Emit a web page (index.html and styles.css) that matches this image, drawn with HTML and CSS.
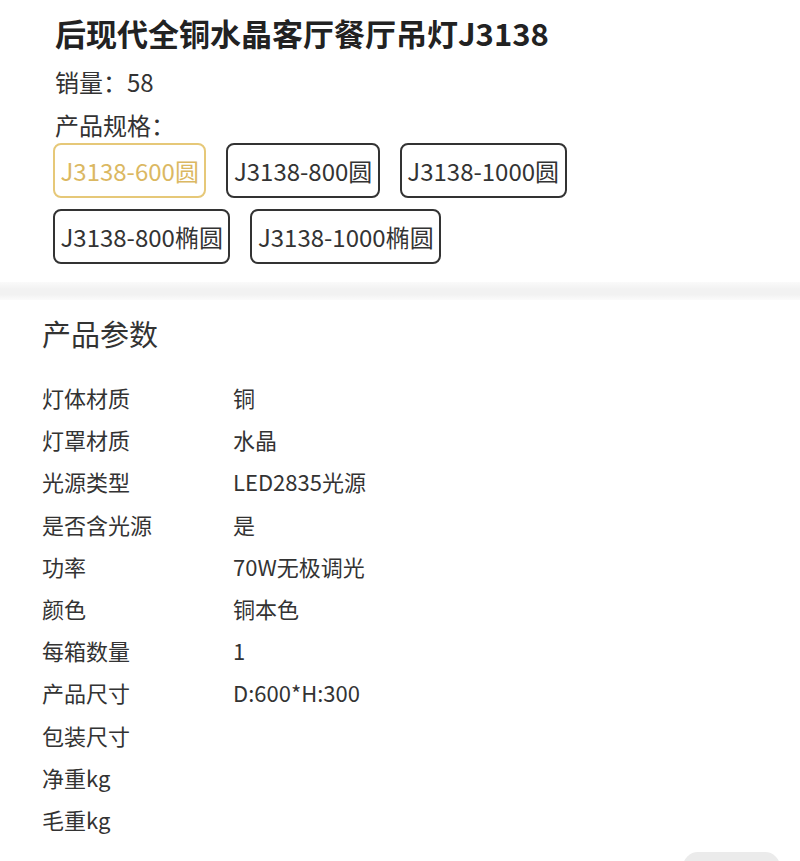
FILE: index.html
```html
<!DOCTYPE html>
<html>
<head>
    <meta charset="utf-8">
    <title>后现代全铜水晶客厅餐厅吊灯J3138</title>
    <link rel="stylesheet" href="styles.css">
</head>
<body>
    <div class="product-top">
        <h1 class="product-title">后现代全铜水晶客厅餐厅吊灯J3138</h1>
        <div class="product-sales">销量：58</div>
        <div class="spec-label">产品规格：</div>
        <div class="spec-list">
            <span class="spec-item active">J3138-600圆</span>
            <span class="spec-item">J3138-800圆</span>
            <span class="spec-item">J3138-1000圆</span>
            <span class="spec-item">J3138-800椭圆</span>
            <span class="spec-item">J3138-1000椭圆</span>
        </div>
    </div>

    <div class="divider"></div>

    <div class="params">
        <h2 class="params-title">产品参数</h2>
        <div class="param-row"><span class="param-name">灯体材质</span><span class="param-value">铜</span></div>
        <div class="param-row"><span class="param-name">灯罩材质</span><span class="param-value">水晶</span></div>
        <div class="param-row"><span class="param-name">光源类型</span><span class="param-value">LED2835光源</span></div>
        <div class="param-row"><span class="param-name">是否含光源</span><span class="param-value">是</span></div>
        <div class="param-row"><span class="param-name">功率</span><span class="param-value">70W无极调光</span></div>
        <div class="param-row"><span class="param-name">颜色</span><span class="param-value">铜本色</span></div>
        <div class="param-row"><span class="param-name">每箱数量</span><span class="param-value">1</span></div>
        <div class="param-row"><span class="param-name">产品尺寸</span><span class="param-value">D:600*H:300</span></div>
        <div class="param-row"><span class="param-name">包装尺寸</span><span class="param-value"></span></div>
        <div class="param-row"><span class="param-name">净重kg</span><span class="param-value"></span></div>
        <div class="param-row"><span class="param-name">毛重kg</span><span class="param-value"></span></div>
    </div>

    <div class="float-button"></div>
</body>
</html>
```

FILE: styles.css
```css
* {
    margin: 0;
    padding: 0;
    box-sizing: border-box;
    font-family: "Noto Sans CJK SC", "Noto Sans", sans-serif;
}

body {
    background: #fff;
    color: #333;
    height: 861px;
    overflow: hidden;
    position: relative;
}

.product-top {
    padding: 13px 20px 0 55px;
    height: 282px;
}

.product-title {
    font-size: 31px;
    font-weight: 700;
    line-height: 40px;
    color: #222;
}

.product-sales {
    margin-top: 8px;
    font-size: 24px;
    line-height: 42px;
}

.spec-label {
    margin-top: 4px;
    font-size: 24px;
    line-height: 36px;
}

.spec-list {
    display: flex;
    flex-wrap: wrap;
    gap: 11px 20px;
    margin-left: -2px;
    max-width: 560px;
}

.spec-item {
    display: inline-block;
    height: 55px;
    padding: 8px 5.5px;
    border: 2px solid #333;
    border-radius: 8px;
    font-size: 24px;
    line-height: 35px;
    color: #333;
}

.spec-item.active {
    border-color: #e6c878;
    color: #dbb862;
}

.divider {
    height: 18px;
    background: linear-gradient(to bottom, #fafafa, #f2f2f2 40%, #f2f2f2 70%, #fbfbfb);
}

.params {
    padding: 13px 20px 0 42px;
}

.params-title {
    font-size: 29px;
    font-weight: 400;
    line-height: 40px;
    margin-bottom: 23px;
}

.param-row {
    display: flex;
    height: 42.2px;
    align-items: center;
    font-size: 22px;
}

.param-name {
    width: 191px;
}

/* 右下角浮动按钮 */
.float-button {
    position: absolute;
    left: 683px;
    top: 852px;
    width: 97px;
    height: 30px;
    border-radius: 15px;
    background: #ebebeb;
}
```
